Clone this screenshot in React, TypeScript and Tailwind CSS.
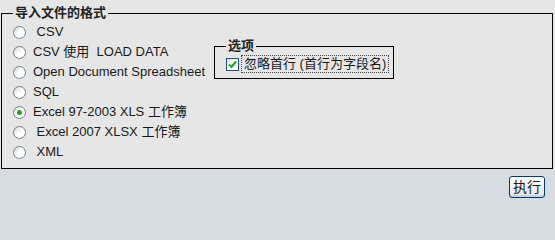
import React from 'react';

const formats = [
  { label: ' CSV', checked: false },
  { label: 'CSV 使用  LOAD DATA', checked: false },
  { label: 'Open Document Spreadsheet', checked: false },
  { label: 'SQL', checked: false },
  { label: 'Excel 97-2003 XLS 工作簿', checked: true },
  { label: ' Excel 2007 XLSX 工作簿', checked: false },
  { label: ' XML', checked: false },
];

const Radio: React.FC<{ checked: boolean }> = ({ checked }) => (
  <span className="w-[13px] h-[13px] rounded-full border border-[#6f8294] bg-gradient-to-br from-[#d4d4cf] via-white to-white flex items-center justify-center shrink-0">
    {checked && <span className="w-[5px] h-[5px] rounded-full bg-[#21a121]" />}
  </span>
);

export default function App() {
  return (
    <div
      className="w-[555px] h-screen min-h-[206px] flex flex-col text-[13px] text-[#1a1a1a] overflow-hidden"
      style={{ fontFamily: '"Liberation Sans", Arial, "Noto Sans CJK SC", sans-serif' }}
    >
      {/* import format */}
      <div className="h-[169px] shrink-0 bg-[#e6e6e6] pt-[5px] pl-[1px] pr-[2px]">
        <fieldset className="h-[164px] border border-black px-[11px] pb-[7px]">
          <legend className="px-[2px] font-bold leading-[16px] text-[#222]">导入文件的格式</legend>
          <div className="flex">
            <div className="flex flex-col w-[201px] pt-[1px]">
              {formats.map((f) => (
                <label key={f.label} className="h-[20px] flex items-center gap-[7px] whitespace-pre">
                  <Radio checked={f.checked} />
                  <span>{f.label}</span>
                </label>
              ))}
            </div>
            {/* options */}
            <fieldset className="mt-[17px] w-[180px] h-[41px] border border-black pl-[11px] self-start">
              <legend className="px-[2px] font-bold leading-[16px] text-[#222]">选项</legend>
              <label className="flex items-center gap-[3px] mt-[2px]">
                <span className="w-[13px] h-[13px] border border-[#1c5180] bg-gradient-to-br from-[#dcdcd7] via-white to-white flex items-center justify-center">
                  <svg width="9" height="9" viewBox="0 0 9 9">
                    <path d="M1 4.5 L3.5 7 L8 1.5" stroke="#21a121" strokeWidth="2" fill="none" />
                  </svg>
                </span>
                <span className="outline-1 outline-dotted outline-[#444] px-[2px] leading-[16px]">忽略首行 (首行为字段名)</span>
              </label>
            </fieldset>
          </div>
        </fieldset>
      </div>
      {/* actions */}
      <div className="flex-1 bg-[#d6dce2] flex justify-end items-start pt-[7px] pr-[10px]">
        <button className="h-[22px] px-[3px] rounded-[3px] border border-[#003c74] bg-gradient-to-b from-white to-[#e6e6e0] text-[14px] leading-[18px] shadow-[inset_0_-2px_0_#c5d2e8]">
          执行
        </button>
      </div>
    </div>
  );
}
